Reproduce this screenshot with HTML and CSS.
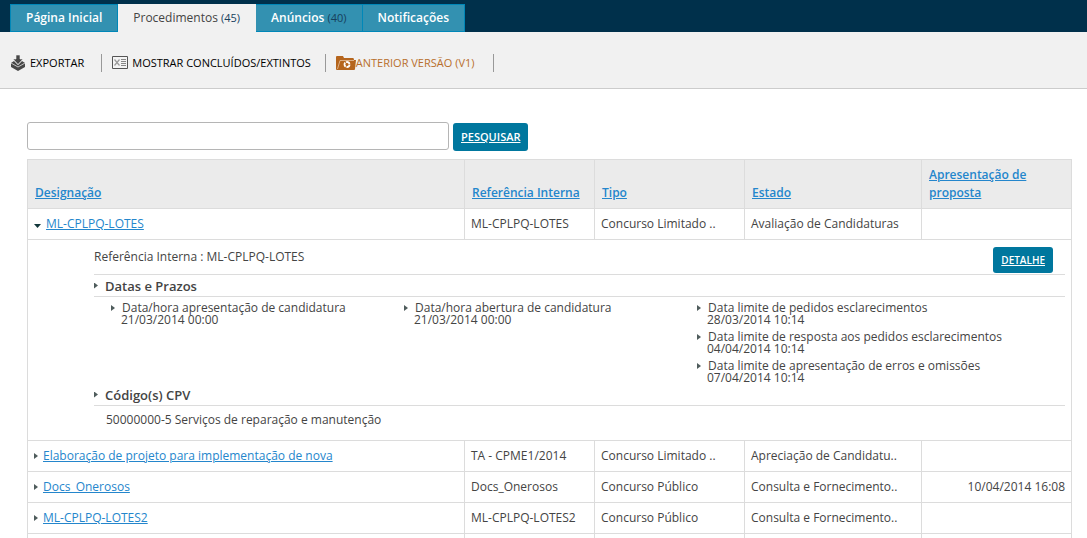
FILE: index.html
```html
<!DOCTYPE html>
<html lang="pt">
<head>
<meta charset="utf-8">
<title>Procedimentos</title>
<link rel="stylesheet" href="styles.css">
</head>
<body>
<nav class="tabs">
  <a class="tab" href="#">Página Inicial</a>
  <a class="tab tab-active" href="#">Procedimentos <span class="count">(45)</span></a>
  <a class="tab" href="#">Anúncios <span class="count">(40)</span></a>
  <a class="tab" href="#">Notificações</a>
</nav>
<div class="toolbar">
  <a class="tool tool-export" href="#">
    <svg class="icon-export" width="16" height="16" viewBox="0 0 16 16" aria-hidden="true">
      <path fill="#484848" d="M1 8l3-2 1 1 3 3 3-3 1-1 3 2v4l-7 4-7-4z"/>
      <path fill="none" stroke="#c4c4c4" d="M1 8l7 4 7-4"/>
      <path fill="#484848" stroke="#f1f1f1" stroke-width=".6" d="M6 0h4v4h3l-5 5.500L3 4h3z"/>
    </svg>
    <span>EXPORTAR</span>
  </a>
  <a class="tool" href="#">
    <svg class="icon-sheet" width="16" height="13" viewBox="0 0 16 13" aria-hidden="true">
      <path fill="#f4f4f4" stroke="#555" d="M.5.500h15v12H.5z"/>
      <path fill="none" stroke="#999" stroke-width="1.200" d="M2.500 3.500l5 6M7.500 3.500l-5 6"/>
      <path stroke="#888" d="M9 3.500h5M9 5.500h5M9 7.500h5M9 9.500h5"/>
    </svg>
    <span>MOSTRAR CONCLUÍDOS/EXTINTOS</span>
  </a>
  <a class="tool tool-old" href="#">
    <svg width="20" height="14" viewBox="0 0 20 14" aria-hidden="true">
      <path fill="#b5651d" d="M0 1q0-1 1-1h6l1 2h9q1 0 1 2h2l-1 9q0 1-1 1H1q-1 0-1-1z"/>
      <path fill="none" stroke="#e6c3a0" stroke-width=".8" d="M1.500 13L4 4.500h14"/>
      <circle cx="11" cy="8.500" r="2.500" fill="none" stroke="#fff" stroke-width="1.800" stroke-dasharray="4.400 .8"/>
    </svg>
    <span>ANTERIOR VERSÃO (V1)</span>
  </a>
</div>
<main class="content">
  <form class="search">
    <input class="search-box" type="text" aria-label="Pesquisar procedimentos">
    <button class="button" type="button">PESQUISAR</button>
  </form>
  <table class="grid">
    <colgroup>
      <col>
      <col class="col-ref">
      <col class="col-type">
      <col class="col-state">
      <col class="col-date">
    </colgroup>
    <thead>
      <tr>
        <th scope="col"><a href="#">Designação</a></th>
        <th scope="col"><a href="#">Referência Interna</a></th>
        <th scope="col"><a href="#">Tipo</a></th>
        <th scope="col"><a href="#">Estado</a></th>
        <th scope="col"><a href="#">Apresentação de proposta</a></th>
      </tr>
    </thead>
    <tbody>
      <tr>
        <td><div class="name"><span class="arrow-down"></span><a href="#">ML-CPLPQ-LOTES</a></div></td>
        <td>ML-CPLPQ-LOTES</td>
        <td>Concurso Limitado ..</td>
        <td>Avaliação de Candidaturas</td>
        <td></td>
      </tr>
      <tr>
        <td class="detail" colspan="5">
          <div class="detail-top">
            <span>Referência Interna : ML-CPLPQ-LOTES</span>
            <button class="button button-small" type="button">DETALHE</button>
          </div>
          <h2 class="section">Datas e Prazos</h2>
          <div class="dates">
            <dl class="date-list">
              <dt>Data/hora apresentação de candidatura</dt><dd>21/03/2014 00:00</dd>
            </dl>
            <dl class="date-list">
              <dt>Data/hora abertura de candidatura</dt><dd>21/03/2014 00:00</dd>
            </dl>
            <dl class="date-list date-list-wide">
              <dt>Data limite de pedidos esclarecimentos</dt><dd>28/03/2014 10:14</dd>
              <dt>Data limite de resposta aos pedidos esclarecimentos</dt><dd>04/04/2014 10:14</dd>
              <dt>Data limite de apresentação de erros e omissões</dt><dd>07/04/2014 10:14</dd>
            </dl>
          </div>
          <h2 class="section">Código(s) CPV</h2>
          <p class="cpv">50000000-5 Serviços de reparação e manutenção</p>
        </td>
      </tr>
      <tr>
        <td><div class="name"><span class="arrow-right"></span><a href="#">Elaboração de projeto para implementação de nova</a></div></td>
        <td>TA - CPME1/2014</td>
        <td>Concurso Limitado ..</td>
        <td>Apreciação de Candidatu..</td>
        <td></td>
      </tr>
      <tr>
        <td><div class="name"><span class="arrow-right"></span><a href="#">Docs_Onerosos</a></div></td>
        <td>Docs_Onerosos</td>
        <td>Concurso Público</td>
        <td>Consulta e Fornecimento..</td>
        <td class="date">10/04/2014 16:08</td>
      </tr>
      <tr>
        <td><div class="name"><span class="arrow-right"></span><a href="#">ML-CPLPQ-LOTES2</a></div></td>
        <td>ML-CPLPQ-LOTES2</td>
        <td>Concurso Público</td>
        <td>Consulta e Fornecimento..</td>
        <td></td>
      </tr>
      <tr class="next-row"><td></td><td></td><td></td><td></td><td></td></tr>
    </tbody>
  </table>
</main>
</body>
</html>
```
FILE: styles.css
```css
* { box-sizing: border-box; }
body {
  margin: 0;
  background: #fff;
  color: #444;
  font: 12px/16px "Trebuchet MS", "Open Sans", sans-serif;
}
.tabs {
  display: flex;
  height: 32px;
  padding: 4px 10px 0;
  background: #00304b;
}
.tab {
  padding: 5px 15px;
  border: 1px solid #0087b8;
  border-left-width: 0;
  background: #3391b1;
  color: #fff;
  font-weight: 600;
  text-decoration: none;
  white-space: nowrap;
}
.tab:first-child { border-left-width: 1px; }
.tab-active {
  border-color: #f1f1f1;
  background: #f1f1f1;
  color: #444;
  font-weight: 500;
}
.count {
  color: #17405c;
  font-size: 11px;
  font-weight: 400;
}
.toolbar {
  display: flex;
  align-items: center;
  height: 57px;
  padding: 5px 10px 0;
  border-bottom: 1px solid #ccc;
  background: #f1f1f1;
}
.tool {
  display: flex;
  align-items: center;
  height: 18px;
  margin-right: 10px;
  padding-right: 14px;
  border-right: 1px solid #999;
  color: #000;
  font-size: 11px;
  font-weight: 500;
  text-decoration: none;
  white-space: nowrap;
}
.tool-export { padding-right: 17px; }
.tool-old {
  padding-right: 18px;
  color: #b86f2c;
}
.icon-export, .icon-sheet { margin-right: 4px; }
.content { padding: 33px 15px 0 27px; }
.search {
  display: flex;
  align-items: flex-end;
  gap: 4px;
  margin-bottom: 8px;
}
.search-box {
  width: 422px;
  height: 28px;
  margin-bottom: 1px;
  padding: 4px 8px;
  border: 1px solid #b5b5b5;
  border-radius: 3px;
  background: #fff;
  font: inherit;
}
.button {
  height: 28px;
  padding: 0 8px;
  border: 0;
  border-radius: 3px;
  background: #00779e;
  color: #fff;
  font: 600 11px/16px "Trebuchet MS", "Open Sans", sans-serif;
  text-decoration: underline;
}
.button-small {
  height: 26px;
  font-size: 10px;
}
.grid {
  width: 100%;
  border-collapse: collapse;
  table-layout: fixed;
}
.col-ref { width: 130px; }
.col-type { width: 150px; }
.col-state { width: 177px; }
.col-date { width: 150px; }
.grid th, .grid td {
  border: 1px solid #dcdcdc;
  text-align: left;
}
.grid th {
  height: 49px;
  padding: 6px 7px;
  background: #ebebeb;
  font-weight: 600;
  line-height: 18px;
  vertical-align: bottom;
}
.grid td {
  height: 31px;
  padding: 0 6px;
  white-space: nowrap;
}
.grid a { color: #2486cc; }
.name {
  display: flex;
  align-items: center;
}
.arrow-right, .section::before, .date-list dt::before {
  flex: none;
  width: 4px;
  height: 6px;
  background: #4f5c5c;
  clip-path: polygon(0 0, 100% 50%, 0 100%);
}
.arrow-right { margin-right: 5px; }
.arrow-down {
  width: 7px;
  height: 4px;
  margin: 4px 5px 0 0;
  background: #12363a;
  clip-path: polygon(0 0, 100% 0, 50% 100%);
}
.grid .date { text-align: right; }
.grid .detail {
  padding: 7px 6px 12px 66px;
}
.detail-top {
  display: flex;
  justify-content: space-between;
  align-items: flex-start;
  height: 28px;
  padding-right: 12px;
  border-bottom: 1px solid #dcdcdc;
}
.detail-top span { padding-top: 2px; }
.section {
  display: flex;
  align-items: center;
  gap: 7px;
  height: 22px;
  margin: 0;
  border-bottom: 1px solid #dcdcdc;
  font-size: 13px;
  font-weight: 600;
  line-height: 18px;
}
.section::before, .date-list dt::before { content: ""; }
.dates {
  display: flex;
  min-height: 87px;
  padding: 5px 0 0 17px;
}
.date-list {
  flex: 293;
  min-width: 0;
  margin: 0;
  line-height: 12px;
}
.date-list-wide { flex: 368; }
.date-list dt {
  display: flex;
  align-items: center;
  gap: 7px;
}
.date-list dd {
  margin: 0 0 5px 10px;
}
.date-list dd:last-child { margin-bottom: 0; }
.cpv {
  margin: 0;
  padding: 6px 0 0 12px;
}
.grid .next-row td { height: 5px; border-bottom: 0; }
```
